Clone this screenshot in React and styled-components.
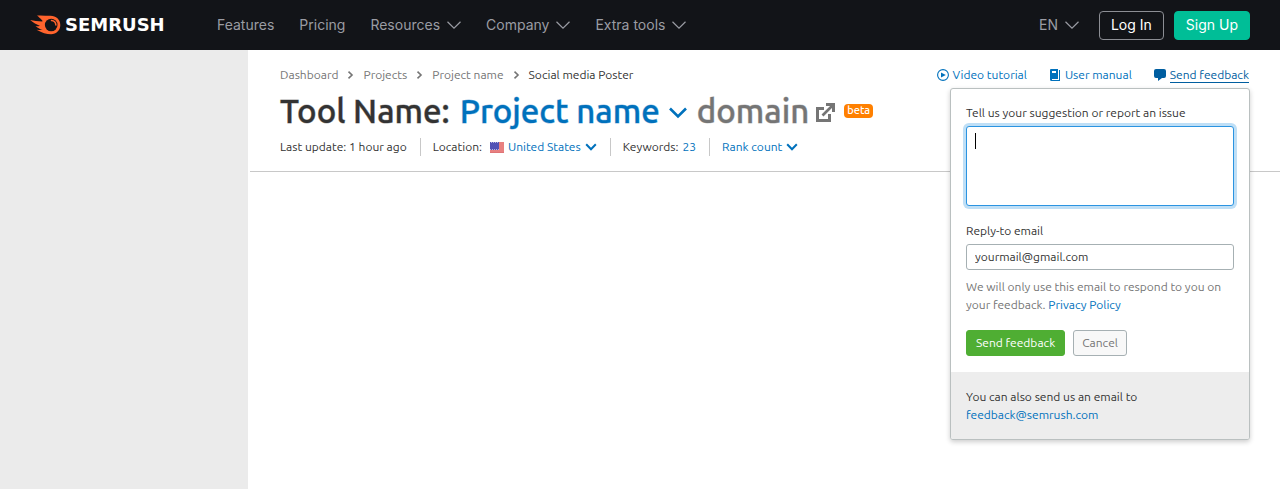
import React from 'react';
import styled, { createGlobalStyle } from 'styled-components';

const blue = '#0071bc';
const darkBlue = '#005ea0';

const GlobalStyle = createGlobalStyle`
  *, *::before, *::after { box-sizing: border-box; }
  body {
    margin: 0;
    background: #fff;
    color: #333;
    font-family: Ubuntu, "Noto Sans", sans-serif;
    font-size: 12px;
    line-height: 18px;
  }
  button, input, textarea { font: inherit; }
  a { text-decoration: none; }
`;

const Page = styled.div`
  display: flex;
  flex-direction: column;
  min-height: 100vh;
`;

const TopBar = styled.header`
  display: flex;
  align-items: center;
  height: 50px;
  padding: 0 30px;
  background: #121418;
  font-family: Inter, sans-serif;
  font-size: 14px;
  line-height: 20px;
`;

const Logo = styled.a`
  display: flex;
  align-items: center;
  gap: 4px;
  width: 187px;
  color: #fff;
  font-family: "DejaVu Sans", sans-serif;
  font-size: 18px;
  font-weight: 700;
`;

const Nav = styled.nav`
  display: flex;
  flex: 1;
  gap: 25px;
`;

const navItem = `
  display: flex;
  align-items: center;
  gap: 7px;
  padding: 0;
  border: 0;
  background: none;
  color: #9a9ca3;
`;

const NavLink = styled.a`${navItem}`;
const NavButton = styled.button`${navItem}`;

const Account = styled.div`
  display: flex;
  align-items: center;
  gap: 10px;
`;

const Language = styled(NavButton)`
  margin-right: 10px;
`;

const AccountButton = styled.button`
  height: 29px;
  padding: 0 11px;
  border: 1px solid ${(p) => (p.$primary ? '#00be97' : '#8c8e94')};
  border-radius: 4px;
  background: ${(p) => (p.$primary ? '#00be97' : 'transparent')};
  color: #fff;
`;

const Body = styled.div`
  display: flex;
  flex: 1;
  gap: 2px;
`;

const Sidebar = styled.aside`
  flex: 0 0 248px;
  background: #ebebeb;
`;

const Main = styled.main`
  flex: 1;
  min-width: 0;
`;

const ToolHeader = styled.div`
  padding: 16px 30px 15px;
  border-bottom: 1px solid #c8c8c8;
`;

const HeaderRow = styled.div`
  display: flex;
  justify-content: space-between;
`;

const Crumbs = styled.nav`
  display: flex;
  align-items: center;
  gap: 9px;
`;

const Crumb = styled.a`
  color: ${(p) => (p.$current ? '#333' : '#757575')};
`;

const HelpLinks = styled.div`
  display: flex;
  gap: 22px;
`;

const HelpLink = styled.a`
  display: flex;
  align-items: center;
  gap: 4px;
  color: ${(p) => (p.$active ? darkBlue : blue)};
`;

const Underlined = styled.span`
  height: 17px;
  border-bottom: 1px solid currentColor;
`;

const FeedbackAnchor = styled.div`
  position: relative;
  padding-right: 1px;
`;

const mediumStroke = `
  -webkit-text-stroke: 1px color-mix(in srgb, currentColor 45%, transparent);
`;

const Title = styled.h1`
  display: flex;
  align-items: center;
  margin: 7px 0;
  font-size: 33px;
  font-weight: 500;
  line-height: 40px;
  white-space: nowrap;
  ${mediumStroke}
`;

const ProjectButton = styled.button`
  display: flex;
  align-items: center;
  gap: 9px;
  margin: 0 10px;
  padding: 0;
  border: 0;
  background: none;
  color: ${blue};
  ${mediumStroke}
`;

const DomainLink = styled.a`
  display: flex;
  align-items: center;
  gap: 7px;
  color: #757575;
  ${mediumStroke}
`;

const Beta = styled.span`
  height: 14px;
  margin-left: 9px;
  padding: 0 3px;
  border-radius: 4px;
  background: #ff8000;
  color: #fff;
  font-size: 11px;
  line-height: 13px;
  -webkit-text-stroke: 0;
`;

const Meta = styled.div`
  display: flex;
  align-items: center;
`;

const MetaItem = styled.div`
  display: flex;
  align-items: center;
  gap: ${(p) => p.$gap || 4}px;
  & + & {
    margin-left: 13px;
    padding-left: 12px;
    border-left: 1px solid #c8c8c8;
  }
`;

const MetaButton = styled.button`
  display: flex;
  align-items: center;
  gap: 4px;
  padding: 0;
  border: 0;
  background: none;
  color: ${blue};
`;

const TextLink = styled.a`
  color: ${blue};
`;

const Popup = styled.form`
  position: absolute;
  z-index: 1;
  top: 22px;
  right: 0;
  width: 300px;
  border: 1px solid #bac0c0;
  border-radius: 3px;
  background: #fff;
  box-shadow: 0 2px 5px rgba(0, 0, 0, 0.2);
`;

const PopupBody = styled.div`
  padding: 15px 15px 16px;
`;

const Field = styled.div`
  display: flex;
  flex-direction: column;
  position: relative;
  gap: 4px;
  margin-bottom: ${(p) => p.$space}px;
`;

const controlStyle = `
  width: 100%;
  margin: 0;
  padding: 0 8px 2px;
  border: 1px solid #a6b0b3;
  border-radius: 3px;
  outline: none;
  background: #fff;
  color: #333;
`;

const TextArea = styled.textarea`
  ${controlStyle}
  display: block;
  height: 80px;
  padding-top: 4px;
  resize: none;
  border-color: #2b94e1;
  box-shadow: 0 0 0 3px #bfdff6;
  caret-color: transparent;
`;

const Caret = styled.span`
  position: absolute;
  top: 29px;
  left: 9px;
  width: 1px;
  height: 16px;
  background: #000;
`;

const EmailInput = styled.input`
  ${controlStyle}
  height: 26px;
`;

const Note = styled.p`
  margin: 0 0 16px;
  color: #757575;
`;

const Actions = styled.div`
  display: flex;
  gap: 8px;
`;

const ActionButton = styled.button`
  height: 26px;
  padding: 0 ${(p) => (p.$primary ? 9 : 8)}px;
  border: 1px solid ${(p) => (p.$primary ? '#4fae33' : '#a6b0b3')};
  border-radius: 3px;
  background: ${(p) => (p.$primary ? '#4fae33' : '#f8f8f8')};
  color: ${(p) => (p.$primary ? '#fff' : '#757575')};
`;

const PopupFooter = styled.div`
  padding: 16px 15px 15px;
  border-radius: 0 0 2px 2px;
  background: #ededed;
`;

function NavChevron() {
  return (
    <svg width="14" height="8" viewBox="0 0 14 8" fill="none" stroke="currentColor" strokeWidth="1.2" aria-hidden="true">
      <path d="M.5.7 7 7.1 13.5.7" />
    </svg>
  );
}

function SmallChevron() {
  return (
    <svg width="12" height="8" viewBox="0 0 12 8" fill="none" stroke="currentColor" strokeWidth="2" aria-hidden="true">
      <path d="M1.2 1.2 6 6.2 10.8 1.2" />
    </svg>
  );
}

function CrumbArrow() {
  return (
    <svg width="7" height="8" viewBox="0 0 7 8" fill="none" stroke="#757575" strokeWidth="1.6" aria-hidden="true">
      <path d="M1.500.7 5 4 1.500 7.300" />
    </svg>
  );
}

function Fireball() {
  return (
    <svg width="31" height="20" viewBox="0 0 31 20" aria-hidden="true">
      <path
        fill="#ff642d"
        d="M7 .6C11 .2 16 .8 20.5.8 26 .8 30.3 4.6 30.3 10c0 5.200-4 9.200-9.200 9.200-4.800 0-8.800-1.300-14.600-4.500 2.200.3 4.600.5 6.200.3-2.500-.9-4.500-1.900-7.200-4.100 1.600.3 3.200.4 4.600.2C7 9.500 2.800 7.700.2 5.100c3.600.8 7.500 1.200 12 1.300.5-.5.3-1-.4-1.500C10.300 3.800 8.700 2 7 .6Z"
      />
      <circle cx="21.200" cy="10" r="6.300" fill="#121418" />
      <path d="M21.500 5.600c2.600.2 4.200 1.800 4.400 4.400" fill="none" stroke="#ff642d" strokeWidth="1.500" strokeLinecap="round" />
    </svg>
  );
}

function Flag() {
  return (
    <svg width="14" height="11" viewBox="0 0 14 11" aria-hidden="true">
      <path fill="#e88080" d="M0 0h14v11H0z" />
      <path stroke="#df7476" d="M0 10.500h14" />
      <path fill="#5252b5" d="M0 0h9v8H0z" />
      <path stroke="#b4b4e3" strokeDasharray="1 1" d="M1 .5h8M0 7.500h9" />
    </svg>
  );
}

export default function App() {
  return (
    <Page>
      <GlobalStyle />
      <TopBar>
        <Logo href="#home">
          <Fireball />
          SEMRUSH
        </Logo>
        <Nav>
          <NavLink href="#features">Features</NavLink>
          <NavLink href="#pricing">Pricing</NavLink>
          <NavButton>Resources <NavChevron /></NavButton>
          <NavButton>Company <NavChevron /></NavButton>
          <NavButton>Extra tools <NavChevron /></NavButton>
        </Nav>
        <Account>
          <Language>EN <NavChevron /></Language>
          <AccountButton>Log In</AccountButton>
          <AccountButton $primary>Sign Up</AccountButton>
        </Account>
      </TopBar>
      <Body>
        <Sidebar />
        <Main>
          <ToolHeader>
            <HeaderRow>
              <Crumbs aria-label="Breadcrumb">
                <Crumb href="#dashboard">Dashboard</Crumb>
                <CrumbArrow />
                <Crumb href="#projects">Projects</Crumb>
                <CrumbArrow />
                <Crumb href="#project">Project name</Crumb>
                <CrumbArrow />
                <Crumb as="span" $current>Social media Poster</Crumb>
              </Crumbs>
              <HelpLinks>
                <HelpLink href="#video">
                  <svg width="12" height="12" viewBox="0 0 12 12" aria-hidden="true">
                    <circle cx="6" cy="6" r="5.400" fill="none" stroke="currentColor" strokeWidth="1.100" />
                    <path d="M4 3.500 8.800 6 4 8.500Z" fill="currentColor" />
                  </svg>
                  Video tutorial
                </HelpLink>
                <HelpLink href="#manual">
                  <svg width="12" height="12" viewBox="0 0 12 12" aria-hidden="true">
                    <path fill="currentColor" d="M2 0h7v10H3v1h7V1h1v11H2.500Q1 12 1 10.500V1Q1 0 2 0Z" />
                    <path fill="#fff" d="M3 2h4v2H3z" />
                  </svg>
                  User manual
                </HelpLink>
                <FeedbackAnchor>
                  <HelpLink href="#feedback" $active>
                    <svg width="12" height="12" viewBox="0 0 12 12" aria-hidden="true">
                      <path fill="currentColor" d="M2 0h8q2 0 2 2v5q0 2-2 2H8l-4 3V9H2Q0 9 0 7V2Q0 0 2 0Z" />
                    </svg>
                    <Underlined>Send feedback</Underlined>
                  </HelpLink>
                  <Popup onSubmit={(e) => e.preventDefault()}>
                    <PopupBody>
                      <Field $space={16}>
                        <label htmlFor="message">Tell us your suggestion or report an issue</label>
                        <TextArea id="message" />
                        <Caret />
                      </Field>
                      <Field $space={8}>
                        <label htmlFor="email">Reply-to email</label>
                        <EmailInput id="email" type="email" defaultValue="yourmail@gmail.com" />
                      </Field>
                      <Note>
                        We will only use this email to respond to you on your feedback.{' '}
                        <TextLink href="#privacy">Privacy Policy</TextLink>
                      </Note>
                      <Actions>
                        <ActionButton type="submit" $primary>Send feedback</ActionButton>
                        <ActionButton type="button">Cancel</ActionButton>
                      </Actions>
                    </PopupBody>
                    <PopupFooter>
                      You can also send us an email to{' '}
                      <TextLink href="mailto:feedback@semrush.com">feedback@semrush.com</TextLink>
                    </PopupFooter>
                  </Popup>
                </FeedbackAnchor>
              </HelpLinks>
            </HeaderRow>
            <Title>
              Tool Name:
              <ProjectButton>
                Project name
                <svg width="18" height="16" viewBox="0 0 18 16" fill="none" stroke="currentColor" strokeWidth="2.600" aria-hidden="true">
                  <path d="M1 5.500 9 13.500 17 5.500" />
                </svg>
              </ProjectButton>
              <DomainLink href="#domain">
                domain
                <svg width="19" height="21" viewBox="0 -2 19 21" aria-hidden="true">
                  <path fill="none" stroke="currentColor" strokeWidth="3" d="M8 5.500H1.500v12h12V11" />
                  <path fill="none" stroke="currentColor" strokeWidth="2.600" d="M6.500 12.500 17 2" />
                  <path fill="currentColor" d="M10 0h9v9h-3V3h-6z" />
                </svg>
              </DomainLink>
              <Beta>beta</Beta>
            </Title>
            <Meta>
              <MetaItem>Last update: 1 hour ago</MetaItem>
              <MetaItem $gap={8}>
                Location:
                <MetaButton><Flag /> United States <SmallChevron /></MetaButton>
              </MetaItem>
              <MetaItem>Keywords: <TextLink href="#keywords">23</TextLink></MetaItem>
              <MetaItem>
                <MetaButton>Rank count <SmallChevron /></MetaButton>
              </MetaItem>
            </Meta>
          </ToolHeader>
        </Main>
      </Body>
    </Page>
  );
}
